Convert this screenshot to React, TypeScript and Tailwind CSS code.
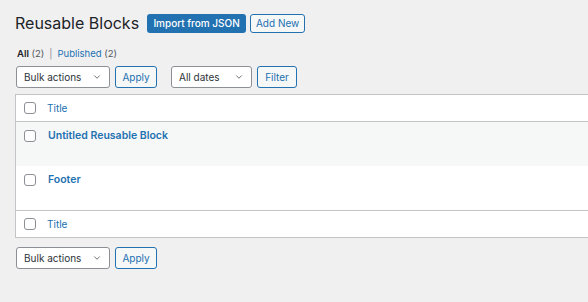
import { ChevronDown } from "lucide-react";

const font = { fontFamily: "Inter, 'Liberation Sans', sans-serif" };

function Select({ label, width }: { label: string; width: string }) {
  return (
    <div
      className={`${width} h-[22px] flex items-center justify-between pl-[7px] pr-[7px] bg-white border border-[#8c8f94] rounded-[3px] text-[10px] text-[#2c3338]`}
    >
      <span>{label}</span>
      <ChevronDown className="w-[10px] h-[10px] text-[#50575e]" strokeWidth={2} />
    </div>
  );
}

function SecondaryButton({ label, width, height = "h-[22px]" }: { label: string; width: string; height?: string }) {
  return (
    <button
      type="button"
      className={`${width} ${height} flex items-center justify-center border border-[#2271b1] bg-[#f6f7f7] rounded-[3px] text-[10px] text-[#2271b1]`}
    >
      {label}
    </button>
  );
}

function Checkbox() {
  return <span className="w-[12px] h-[12px] shrink-0 bg-white border border-[#8c8f94] rounded-[3px]" />;
}

function BulkRow() {
  return (
    <div className="flex items-center gap-[5px]">
      <Select label="Bulk actions" width="w-[94px]" />
      <SecondaryButton label="Apply" width="w-[42px]" />
    </div>
  );
}

export default function App() {
  return (
    <div className="w-[588px] h-[302px] overflow-hidden bg-[#f0f0f1] pl-[16px] pt-[14px]" style={font}>
      <div className="flex items-center h-[19px]">
        <h1 className="text-[16px] leading-[19px] font-normal text-[#1d2327] mr-[8px] -ml-[1px]">Reusable Blocks</h1>
        <button
          type="button"
          className="w-[99px] h-[19px] flex items-center justify-center bg-[#2271b1] rounded-[3px] text-[10px] font-medium text-white"
        >
          Import from JSON
        </button>
        <div className="ml-[4px]">
          <SecondaryButton label="Add New" width="w-[55px]" height="h-[19px]" />
        </div>
      </div>

      <div className="mt-[14px] h-[13px] text-[9.5px] leading-[13px] text-[#50575e] pl-[1px]">
        <span className="font-semibold text-[#1d2327]">All</span> (2)
        <span className="mx-[5px] text-[#8c8f94]">|</span>
        <span className="text-[#2271b1]">Published</span> (2)
      </div>

      <div className="mt-[6px] flex items-center">
        <BulkRow />
        <div className="ml-[14px] flex items-center gap-[5px]">
          <Select label="All dates" width="w-[81px]" />
          <SecondaryButton label="Filter" width="w-[40px]" />
        </div>
      </div>

      <div className="mt-[6px] -ml-[1px] w-[600px] bg-white border border-[#c3c4c7]">
        <div className="h-[27px] flex items-center pl-[8px] gap-[11px] border-b border-[#c3c4c7]">
          <Checkbox />
          <span className="text-[10px] text-[#2271b1]">Title</span>
        </div>
        <div className="h-[44px] flex items-start pt-[8px] pl-[8px] gap-[12px] bg-[#f6f7f7]">
          <Checkbox />
          <span className="text-[10.5px] leading-[12px] font-semibold text-[#2271b1]">Untitled Reusable Block</span>
        </div>
        <div className="h-[44px] flex items-start pt-[8px] pl-[8px] gap-[12px] bg-white">
          <Checkbox />
          <span className="text-[10.5px] leading-[12px] font-semibold text-[#2271b1]">Footer</span>
        </div>
        <div className="h-[27px] flex items-center pl-[8px] gap-[11px] border-t border-[#c3c4c7]">
          <Checkbox />
          <span className="text-[10px] text-[#2271b1]">Title</span>
        </div>
      </div>

      <div className="mt-[9px]">
        <BulkRow />
      </div>
    </div>
  );
}
